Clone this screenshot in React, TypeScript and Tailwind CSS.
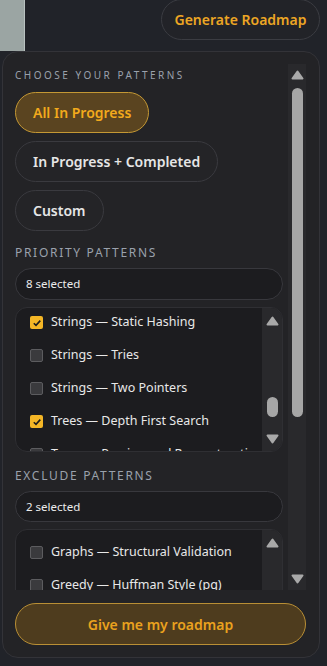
import React from "react"

const priority = [
  { label: "Strings — Static Hashing", checked: true },
  { label: "Strings — Tries", checked: false },
  { label: "Strings — Two Pointers", checked: false },
  { label: "Trees — Depth First Search", checked: true },
  { label: "Trees — Parsing and Reconstruction", checked: false },
]

const exclude = [
  { label: "Graphs — Structural Validation", checked: false },
  { label: "Greedy — Huffman Style (pq)", checked: false },
]

function Arrow({ down = false }: { down?: boolean }) {
  return (
    <svg width="13" height="10" viewBox="0 0 13 10" className={down ? "rotate-180" : ""}>
      <polygon points="6.5,1.5 11.5,8.5 1.5,8.5" fill="#a9a9a9" stroke="#a9a9a9" strokeWidth="2" strokeLinejoin="round" />
    </svg>
  )
}

function Checkbox({ checked }: { checked: boolean }) {
  if (checked) {
    return (
      <span className="flex h-[13px] w-[13px] shrink-0 items-center justify-center rounded-[2px] bg-[#f4b626]">
        <svg width="10" height="10" viewBox="0 0 10 10">
          <path d="M1.8 5.2 L4 7.4 L8.3 2.6" fill="none" stroke="#1d1d1d" strokeWidth="1.6" />
        </svg>
      </span>
    )
  }
  return <span className="h-[13px] w-[13px] shrink-0 rounded-[2px] border border-[#5c5c5f] bg-[#3a3a3d]" />
}

function ListBox({
  items,
  offset,
  height,
  thumb,
}: {
  items: { label: string; checked: boolean }[]
  offset: string
  height: string
  thumb: boolean
}) {
  return (
    <div className={`mt-[7px] flex shrink-0 overflow-hidden rounded-[12px] border border-[#2f2f33] bg-[#1c1c1f] ${height}`}>
      <div className={`flex-1 overflow-hidden ${offset}`}>
        {items.map((item) => (
          <div key={item.label} className="flex h-[33px] items-center gap-[8px] pl-[14px] whitespace-nowrap">
            <Checkbox checked={item.checked} />
            <span className="text-[12.5px] text-[#e8e8e8]">{item.label}</span>
          </div>
        ))}
      </div>
      <div className="flex w-[20px] shrink-0 flex-col items-center bg-[#29292c]">
        <div className="flex h-[24px] items-center pt-[1px]">
          <Arrow />
        </div>
        {thumb && (
          <>
            <div className="flex-1" />
            <div className="mb-[12px] h-[20px] w-[11px] rounded-full bg-[#a6a6a6]" />
            <div className="flex h-[22px] items-center pb-[2px]">
              <Arrow down />
            </div>
          </>
        )}
      </div>
    </div>
  )
}

export default function App() {
  return (
    <div className="h-[666px] w-[327px] overflow-hidden bg-[#212329] font-['Noto_Sans',sans-serif]">
      <div className="flex h-[51px] justify-between">
        <div className="h-[51px] w-[25px] border-r border-[#b9c2c0] bg-[#9ba5a3]" />
        <button className="mr-[7px] mt-[-1px] h-[41px] w-[159px] rounded-full border border-[#3b3c42] bg-[#222328] text-[14px] font-semibold text-[#eda624]">
          Generate Roadmap
        </button>
      </div>

      <div className="ml-[2px] mr-[7px] flex h-[607px] flex-col rounded-[16px] border border-[#333338] bg-[#232326] pl-[12px] pr-[13px] pt-[12px] pb-[12px]">
        <div className="flex h-[526px] shrink-0 gap-[5px]">
          <div className="flex w-[268px] flex-col overflow-hidden pt-[4px]">
            <div className="text-[10px] leading-[14px] tracking-[2.5px] text-[#9aa1ac]">CHOOSE YOUR PATTERNS</div>

            <div className="mt-[10px] flex flex-col items-start gap-[8px]">
              <button className="h-[41px] rounded-full border border-[#c49834] bg-[#5a4420] px-[17px] text-[14px] font-semibold text-[#f2aa1c]">
                All In Progress
              </button>
              <button className="h-[41px] rounded-full border border-[#3a3a3f] bg-[#242427] px-[17px] text-[14px] font-semibold text-[#e6e6e6]">
                In Progress + Completed
              </button>
              <button className="h-[41px] rounded-full border border-[#3a3a3f] bg-[#242427] px-[17px] text-[14px] font-semibold text-[#e6e6e6]">
                Custom
              </button>
            </div>

            <div className="mt-[13px] text-[12px] leading-[18px] tracking-[1.7px] text-[#9aa1ac]">PRIORITY PATTERNS</div>
            <div className="mt-[6px] flex h-[32px] shrink-0 items-center rounded-full border border-[#38383d] bg-[#1c1c1f] px-[10px] text-[11.5px] text-[#ececec]">
              8 selected
            </div>
            <ListBox items={priority} offset="-mt-[2px]" height="h-[145px]" thumb />

            <div className="mt-[15px] text-[12px] leading-[18px] tracking-[1.7px] text-[#9aa1ac]">EXCLUDE PATTERNS</div>
            <div className="mt-[6px] flex h-[31px] shrink-0 items-center rounded-full border border-[#38383d] bg-[#1c1c1f] px-[10px] text-[11.5px] text-[#ececec]">
              2 selected
            </div>
            <ListBox items={exclude} offset="pt-[6px]" height="h-[80px]" thumb={false} />
          </div>

          <div className="flex w-[18px] shrink-0 flex-col items-center bg-[#29292c]">
            <div className="flex h-[22px] items-center">
              <Arrow />
            </div>
            <div className="mt-[2px] h-[329px] w-[11px] rounded-full bg-[#a6a6a6]" />
            <div className="flex-1" />
            <div className="flex h-[22px] items-center">
              <Arrow down />
            </div>
          </div>
        </div>

        <button className="mt-[13px] h-[42px] shrink-0 rounded-full border border-[#b98f35] bg-[#4e3c1e] text-[14px] font-semibold text-[#eaa21e]">
          Give me my roadmap
        </button>
      </div>
    </div>
  )
}
